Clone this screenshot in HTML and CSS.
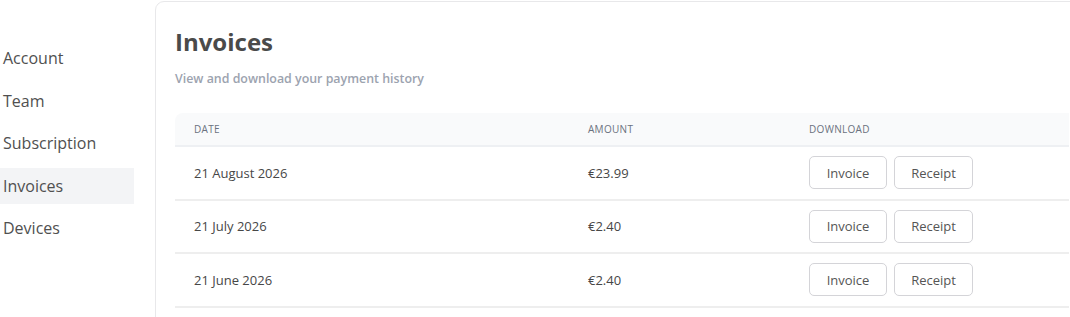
FILE: index.html
```html
<!DOCTYPE html>
<html lang="en">
<head>
    <meta charset="UTF-8">
    <meta name="viewport" content="width=device-width, initial-scale=1.0">
    <title>Invoices</title>
    <link rel="stylesheet" href="styles.css">
</head>
<body>
    <div class="layout">
        <!-- side menu -->
        <nav class="side-nav">
            <a class="nav-item" href="#">Account</a>
            <a class="nav-item" href="#">Team</a>
            <a class="nav-item" href="#">Subscription</a>
            <a class="nav-item active" href="#">Invoices</a>
            <a class="nav-item" href="#">Devices</a>
        </nav>

        <!-- main card -->
        <main class="card">
            <h1 class="card-title">Invoices</h1>
            <p class="card-subtitle">View and download your payment history</p>

            <table class="invoice-table">
                <thead>
                    <tr>
                        <th class="col-date">Date</th>
                        <th class="col-amount">Amount</th>
                        <th>Download</th>
                    </tr>
                </thead>
                <tbody>
                    <tr>
                        <td>21 August 2026</td>
                        <td class="amount">€23.99</td>
                        <td>
                            <div class="actions">
                                <button class="btn">Invoice</button>
                                <button class="btn">Receipt</button>
                            </div>
                        </td>
                    </tr>
                    <tr>
                        <td>21 July 2026</td>
                        <td class="amount">€2.40</td>
                        <td>
                            <div class="actions">
                                <button class="btn">Invoice</button>
                                <button class="btn">Receipt</button>
                            </div>
                        </td>
                    </tr>
                    <tr>
                        <td>21 June 2026</td>
                        <td class="amount">€2.40</td>
                        <td>
                            <div class="actions">
                                <button class="btn">Invoice</button>
                                <button class="btn">Receipt</button>
                            </div>
                        </td>
                    </tr>
                </tbody>
            </table>
        </main>
    </div>
</body>
</html>
```

FILE: styles.css
```css
* {
    margin: 0;
    padding: 0;
    box-sizing: border-box;
}

body {
    font-family: "Open Sans", "Noto Sans", sans-serif;
    background-color: #ffffff;
    color: #444;
    overflow: hidden;
}

.layout {
    display: flex;
    gap: 21px;
    width: 1200px;
}

/* side menu */
.side-nav {
    width: 134px;
    flex-shrink: 0;
    padding-top: 40px;
    display: flex;
    flex-direction: column;
    gap: 6.5px;
}

.nav-item {
    display: flex;
    align-items: center;
    height: 36px;
    padding-left: 3px;
    font-size: 16px;
    color: #505050;
    text-decoration: none;
}

.nav-item.active {
    background-color: #f3f4f6;
}

/* card */
.card {
    width: 934px;
    height: 330px;
    margin-top: 1px;
    padding: 24px 19px 0;
    border: 1px solid #e8e8ea;
    border-radius: 9px;
}

.card-title {
    font-size: 24px;
    font-weight: 700;
    color: #4a4a4a;
    line-height: 32px;
}

.card-subtitle {
    margin-top: 13px;
    font-size: 12.4px;
    font-weight: 600;
    color: #9ca3af;
    line-height: 16px;
}

/* table */
.invoice-table {
    margin-top: 26px;
    width: 894px;
    border-collapse: collapse;
    font-size: 13px;
}

.invoice-table th {
    height: 33px;
    padding: 0 19px;
    text-align: left;
    font-size: 10px;
    font-weight: 500;
    letter-spacing: 0.3px;
    text-transform: uppercase;
    color: #6b7280;
    background-color: #f9fafb;
    border-bottom: 2px solid #eef0f3;
}

.invoice-table th:first-child {
    border-top-left-radius: 8px;
}

.col-date {
    width: 394px;
}

.col-amount {
    width: 221px;
}

.invoice-table td {
    height: 53.5px;
    padding: 0 19px;
    color: #474747;
    border-bottom: 2px solid #eeeeee;
}

.amount {
    color: #3a3a3a;
}

.actions {
    display: flex;
    gap: 7px;
}

.btn {
    width: 78px;
    height: 33px;
    font-family: inherit;
    font-size: 13px;
    color: #555;
    background-color: #ffffff;
    border: 1px solid #d4d4d8;
    border-radius: 5px;
    cursor: pointer;
}

.btn + .btn {
    width: 79px;
}
```
